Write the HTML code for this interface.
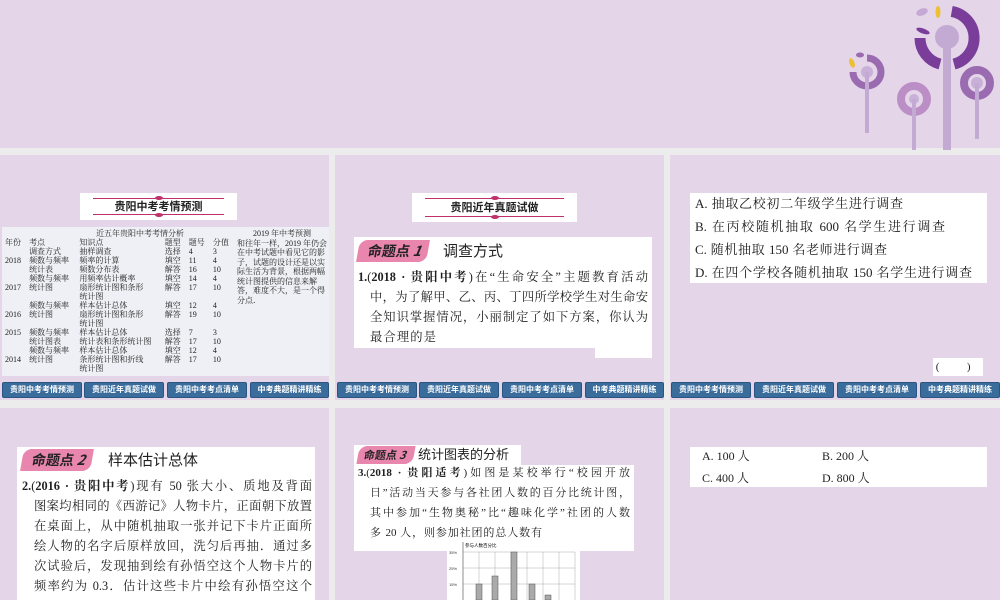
<!DOCTYPE html>
<html><head><meta charset="utf-8"><style>
*{margin:0;padding:0;box-sizing:border-box}
html,body{width:1000px;height:600px;overflow:hidden}
body{background:#ececec;position:relative;font-family:"Liberation Serif","Noto Serif CJK SC",serif;color:#222}
.a{position:absolute}
.p{position:absolute;background:#e4d5e9}
.w{position:absolute;background:#fff}
.nav{position:absolute;height:16px;background:#3b6d9c;border:1px solid #2a5580;border-radius:2px;color:#fff;font-size:8px;text-align:center;line-height:14px;font-family:"Liberation Sans","Noto Sans CJK SC",sans-serif;font-weight:bold}
.ban{position:absolute;background:#fff;text-align:center;font-weight:bold;font-size:11px;font-family:"Noto Sans CJK SC",sans-serif}
.ban:before,.ban:after{content:"";position:absolute;left:8%;right:8%;height:1px;background:#c0306a}
.ban:before{top:5px}.ban:after{bottom:5px}
.ban i{position:absolute;left:50%;width:8px;height:4px;margin-left:-4px;background:#c0306a;border-radius:50%}
.lab{position:absolute;background:#e886ad;color:#222;font-weight:bold;font-family:"Noto Sans CJK SC",sans-serif;font-size:14px;line-height:22px;padding-left:10px;border-radius:8px 0 8px 0;transform:skewX(-10deg)}
.ln{position:absolute;white-space:nowrap;text-align:justify;text-align-last:justify;font-size:12.3px;height:20px;line-height:20px}
table{border-collapse:collapse;font-size:8px;line-height:9px}
td{padding:0 3px;vertical-align:top}
</style></head><body>
<div class="p" style="left:0;top:0;width:1000px;height:148px"></div>
<svg class="a" style="left:820px;top:0" width="180" height="150">
<path d="M131.7 11.4 A27 27 0 0 1 134 64.1" fill="none" stroke="#7a3e9a" stroke-width="11"/>
<path d="M120 64.1 A27 27 0 0 1 100 38" fill="none" stroke="#7a3e9a" stroke-width="11"/>
<ellipse cx="103" cy="31" rx="7" ry="2.5" fill="#7a3e9a" transform="rotate(20 103 31)"/>
<ellipse cx="102" cy="12" rx="6" ry="3.5" fill="#c5a9d4" transform="rotate(-20 102 12)"/>
<ellipse cx="118" cy="12" rx="2.5" ry="6" fill="#ecc032"/>
<line x1="127" y1="37" x2="127" y2="150" stroke="#c3aad3" stroke-width="8"/>
<circle cx="127" cy="37" r="12" fill="#c3aad3"/>
<path d="M47 58 A14 14 0 1 1 33 72" fill="none" stroke="#9a6bb0" stroke-width="7"/>
<circle cx="47" cy="72" r="6" fill="#c8b0d8"/>
<line x1="47" y1="72" x2="47" y2="133" stroke="#c3aad3" stroke-width="4"/>
<ellipse cx="32" cy="63" rx="2.5" ry="5" fill="#ecc032" transform="rotate(-20 32 63)"/>
<ellipse cx="40" cy="55" rx="4" ry="2.5" fill="#9a6bb0"/>
<circle cx="94" cy="99" r="13" fill="none" stroke="#bb8ec6" stroke-width="8"/>
<circle cx="94" cy="99" r="5" fill="#c8b0d8"/>
<line x1="94" y1="99" x2="94" y2="150" stroke="#c3aad3" stroke-width="4"/>
<circle cx="157" cy="83" r="13" fill="none" stroke="#9a6bb0" stroke-width="8"/>
<circle cx="157" cy="83" r="6" fill="#c8b0d8"/>
<line x1="157" y1="83" x2="157" y2="139" stroke="#c3aad3" stroke-width="4"/>
</svg>

<div class="p" style="left:0;top:155px;width:329px;height:245px"></div>
<div class="p" style="left:335px;top:155px;width:329px;height:245px"></div>
<div class="p" style="left:670px;top:155px;width:330px;height:245px"></div>
<div class="p" style="left:0;top:408px;width:329px;height:192px"></div>
<div class="p" style="left:335px;top:408px;width:329px;height:192px"></div>
<div class="p" style="left:670px;top:408px;width:330px;height:192px"></div>

<!-- panel1 -->
<div class="ban" style="left:80px;top:193px;width:157px;height:27px;line-height:27px"><i style="top:3px"></i>贵阳中考考情预测<i style="bottom:3px"></i></div>
<div class="a" style="left:2px;top:227px;width:327px;height:149px;background:#eef0f5"></div>
<table class="a" style="left:2px;top:229px;width:232px">
<tr><td></td><td colspan="6" style="padding-left:70px">近五年贵阳中考考情分析</td></tr>
<tr><td>年份</td><td>考点</td><td>知识点</td><td>题型</td><td>题号</td><td>分值</td></tr>
<tr><td></td><td>调查方式</td><td>抽样调查</td><td>选择</td><td>4</td><td>3</td></tr>
<tr><td>2018</td><td>频数与频率</td><td>频率的计算</td><td>填空</td><td>11</td><td>4</td></tr>
<tr><td></td><td>统计表</td><td>频数分布表</td><td>解答</td><td>16</td><td>10</td></tr>
<tr><td></td><td>频数与频率</td><td>用频率估计概率</td><td>填空</td><td>14</td><td>4</td></tr>
<tr><td>2017</td><td>统计图</td><td>扇形统计图和条形<br>统计图</td><td>解答</td><td>17</td><td>10</td></tr>
<tr><td></td><td>频数与频率</td><td>样本估计总体</td><td>填空</td><td>12</td><td>4</td></tr>
<tr><td>2016</td><td>统计图</td><td>扇形统计图和条形<br>统计图</td><td>解答</td><td>19</td><td>10</td></tr>
<tr><td>2015</td><td>频数与频率</td><td>样本估计总体</td><td>选择</td><td>7</td><td>3</td></tr>
<tr><td></td><td>统计图表</td><td>统计表和条形统计图</td><td>解答</td><td>17</td><td>10</td></tr>
<tr><td></td><td>频数与频率</td><td>样本估计总体</td><td>填空</td><td>12</td><td>4</td></tr>
<tr><td>2014</td><td>统计图</td><td>条形统计图和折线<br>统计图</td><td>解答</td><td>17</td><td>10</td></tr>
</table>
<div class="a" style="left:237px;top:229px;width:90px;font-size:8px;line-height:9.5px">
<div style="text-align:center">2019 年中考预测</div>和往年一样，2019 年仍会在中考试题中看见它的影子，试题的设计还是以实际生活为背景，根据两幅统计图提供的信息来解答，难度不大，是一个得分点．</div>

<!-- panel2 -->
<div class="ban" style="left:412px;top:193px;width:165px;height:29px;line-height:29px"><i style="top:3px"></i>贵阳近年真题试做<i style="bottom:3px"></i></div>
<div class="w" style="left:354px;top:237px;width:298px;height:111px"></div>
<div class="w" style="left:595px;top:340px;width:57px;height:18px"></div>
<div class="lab" style="left:358px;top:240px;width:70px;height:22px">命题点 <i>1</i></div>
<div class="a" style="left:443px;top:240px;font-size:15px;line-height:22px;font-family:'Noto Sans CJK SC',sans-serif">调查方式</div>
<div class="ln" style="left:358px;top:267px;width:290px"><b>1.</b>(<b>2018 · 贵阳中考</b>)在“生命安全”主题教育活动</div>
<div class="ln" style="left:370px;top:287px;width:278px">中，为了解甲、乙、丙、丁四所学校学生对生命安</div>
<div class="ln" style="left:370px;top:307px;width:278px">全知识掌握情况，小丽制定了如下方案，你认为</div>
<div class="ln" style="left:370px;top:327px;width:66px">最合理的是</div>

<!-- panel3 -->
<div class="w" style="left:690px;top:193px;width:297px;height:90px"></div>
<div class="ln" style="left:695px;top:192px;width:208px;height:23px;line-height:23px;font-size:13px">A. 抽取乙校初二年级学生进行调查</div>
<div class="ln" style="left:695px;top:215px;width:250px;height:23px;line-height:23px;font-size:13px">B. 在丙校随机抽取 600 名学生进行调查</div>
<div class="ln" style="left:695px;top:238px;width:192px;height:23px;line-height:23px;font-size:13px">C. 随机抽取 150 名老师进行调查</div>
<div class="ln" style="left:695px;top:261px;width:277px;height:23px;line-height:23px;font-size:13px">D. 在四个学校各随机抽取 150 名学生进行调查</div>
<div class="w" style="left:933px;top:358px;width:50px;height:18px;font-size:11px;line-height:18px">&nbsp;(&nbsp;&nbsp;&nbsp;&nbsp;&nbsp;&nbsp;&nbsp;&nbsp;&nbsp;&nbsp;)</div>

<!-- navs -->
<div class="nav" style="left:2px;top:382px;width:80px">贵阳中考考情预测</div>
<div class="nav" style="left:84px;top:382px;width:80px">贵阳近年真题试做</div>
<div class="nav" style="left:167px;top:382px;width:80px">贵阳中考考点清单</div>
<div class="nav" style="left:250px;top:382px;width:79px">中考典题精讲精练</div>
<div class="nav" style="left:337px;top:382px;width:80px">贵阳中考考情预测</div>
<div class="nav" style="left:419px;top:382px;width:80px">贵阳近年真题试做</div>
<div class="nav" style="left:502px;top:382px;width:80px">贵阳中考考点清单</div>
<div class="nav" style="left:585px;top:382px;width:79px">中考典题精讲精练</div>
<div class="nav" style="left:671px;top:382px;width:80px">贵阳中考考情预测</div>
<div class="nav" style="left:754px;top:382px;width:80px">贵阳近年真题试做</div>
<div class="nav" style="left:837px;top:382px;width:80px">贵阳中考考点清单</div>
<div class="nav" style="left:920px;top:382px;width:80px">中考典题精讲精练</div>

<!-- row2 panel1 -->
<div class="w" style="left:17px;top:447px;width:298px;height:153px"></div>
<div class="lab" style="left:22px;top:449px;width:70px;height:22px">命题点 <i>2</i></div>
<div class="a" style="left:108px;top:449px;font-size:15px;line-height:22px;font-family:'Noto Sans CJK SC',sans-serif">样本估计总体</div>
<div class="ln" style="left:22px;top:476px;width:290px"><b>2.</b>(<b>2016 · 贵阳中考</b>)现有 50 张大小、质地及背面</div>
<div class="ln" style="left:34px;top:496px;width:278px">图案均相同的《西游记》人物卡片，正面朝下放置</div>
<div class="ln" style="left:34px;top:516px;width:278px">在桌面上，从中随机抽取一张并记下卡片正面所</div>
<div class="ln" style="left:34px;top:536px;width:278px">绘人物的名字后原样放回，洗匀后再抽．通过多</div>
<div class="ln" style="left:34px;top:556px;width:278px">次试验后，发现抽到绘有孙悟空这个人物卡片的</div>
<div class="ln" style="left:34px;top:576px;width:278px">频率约为 0.3．估计这些卡片中绘有孙悟空这个</div>

<!-- row2 panel2 -->
<div class="w" style="left:354px;top:445px;width:167px;height:22px"></div>
<div class="w" style="left:354px;top:465px;width:280px;height:86px"></div>
<div class="lab" style="left:358px;top:446px;width:56px;height:18px;font-size:11px;line-height:18px;padding-left:6px">命题点 <i>3</i></div>
<div class="a" style="left:418px;top:444px;font-size:13px;line-height:20px;font-family:'Noto Sans CJK SC',sans-serif">统计图表的分析</div>
<div class="ln" style="left:358px;top:463px;width:272px;font-size:11px"><b>3.</b>(<b>2018 · 贵阳适考</b>)如图是某校举行“校园开放</div>
<div class="ln" style="left:370px;top:483px;width:260px;font-size:11px">日”活动当天参与各社团人数的百分比统计图，</div>
<div class="ln" style="left:370px;top:503px;width:260px;font-size:11px">其中参加“生物奥秘”比“趣味化学”社团的人数</div>
<div class="ln" style="left:370px;top:523px;width:172px;font-size:11px">多 20 人，则参加社团的总人数有</div>
<div class="w" style="left:447px;top:538px;width:133px;height:62px"></div>
<svg class="a" style="left:447px;top:538px" width="133" height="62">
<text x="18" y="9" font-size="4.5" font-family="Liberation Sans,Noto Sans CJK SC,sans-serif">参与人数百分比</text>
<line x1="16" y1="4" x2="16" y2="62" stroke="#444" stroke-width=".6"/>
<g stroke="#999" stroke-width=".4">
<line x1="16" y1="14" x2="128" y2="14"/><line x1="16" y1="30" x2="128" y2="30"/><line x1="16" y1="46" x2="128" y2="46"/>
<line x1="32" y1="14" x2="32" y2="62"/><line x1="48" y1="14" x2="48" y2="62"/><line x1="64" y1="14" x2="64" y2="62"/><line x1="80" y1="14" x2="80" y2="62"/><line x1="96" y1="14" x2="96" y2="62"/><line x1="112" y1="14" x2="112" y2="62"/><line x1="128" y1="14" x2="128" y2="62"/>
</g>
<g font-size="4" fill="#333" font-family="Liberation Sans,sans-serif"><text x="2" y="16">35%</text><text x="2" y="32">25%</text><text x="2" y="48">15%</text></g>
<g fill="#aaa" stroke="#555" stroke-width=".5">
<rect x="29" y="46" width="6" height="16"/><rect x="45" y="38" width="6" height="24"/><rect x="64" y="14" width="6" height="48"/><rect x="82" y="46" width="6" height="16"/><rect x="98" y="57" width="6" height="5"/>
</g>
</svg>

<!-- row2 panel3 -->
<div class="w" style="left:690px;top:447px;width:297px;height:40px"></div>
<div class="a" style="left:702px;top:445px;font-size:12px;line-height:22px">A. 100 人<br>C. 400 人</div>
<div class="a" style="left:822px;top:445px;font-size:12px;line-height:22px">B. 200 人<br>D. 800 人</div>
</body></html>
